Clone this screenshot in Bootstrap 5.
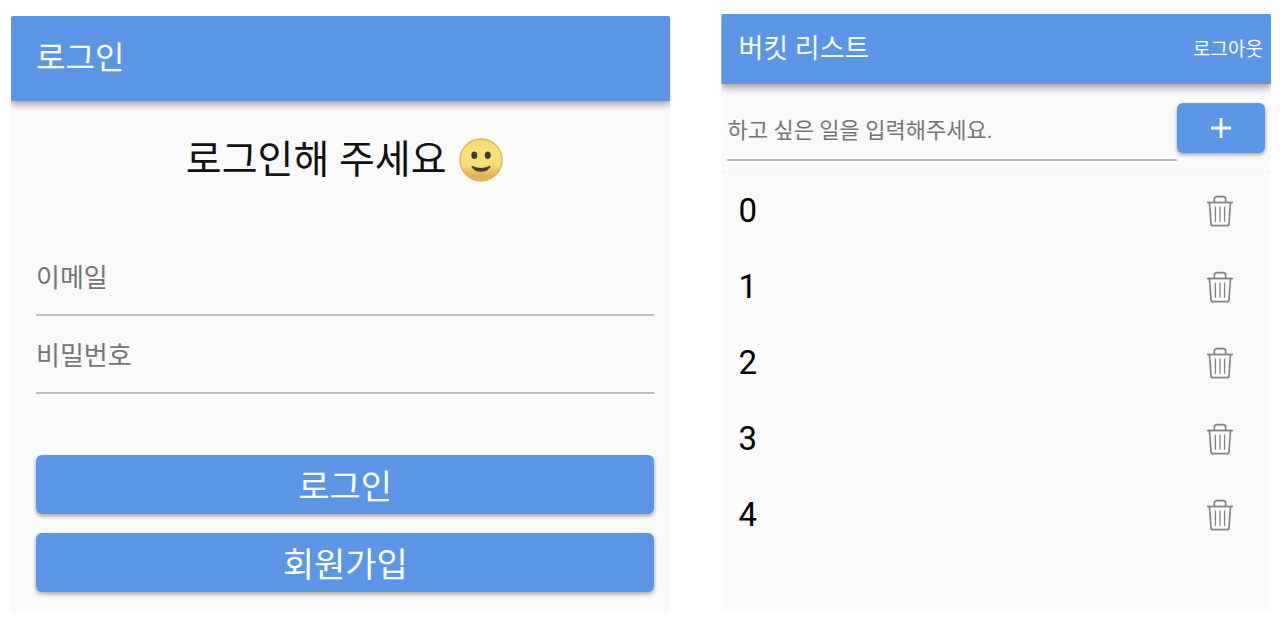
<!DOCTYPE html>
<html lang="ko">
<head>
<meta charset="utf-8">
<meta name="viewport" content="width=device-width, initial-scale=1">
<title>버킷 리스트</title>
<link href="https://cdn.jsdelivr.net/npm/bootstrap@5.3.0/dist/css/bootstrap.min.css" rel="stylesheet">
<style>
:root { --brand: #5b96e6; --surface: #fafafa; --hint: #757575; --line: #bdbdbd; }
body { font-family: Roboto, "Noto Sans CJK KR", sans-serif; background: #fff; color: #111; }
.screens { display: grid; grid-template-columns: 1fr; gap: 24px; padding: 14px 9px 9px 11px; }
@media (min-width: 992px) { .screens { grid-template-columns: 6fr 5fr; column-gap: 51px; } }
.screen { background: var(--surface); border-radius: 2px 2px 0 0; }
.screen-login { margin-top: 2px; }
.app-bar { background: var(--brand); color: #fff; border-radius: 2px 2px 0 0; box-shadow: 0 3px 8px rgba(0,0,0,.42); clip-path: inset(0 0 -20px 0); }
.app-bar h1 { font-weight: 400; line-height: 1; }
.bar-login { height: 85px; padding: 0 25px 2px; }
.bar-login h1 { font-size: 32px; }
.bar-list { height: 70px; padding: 0 8px 0 17px; }
.bar-list h1 { font-size: 27px; }
.bar-link { color: #fff; font-size: 19px; line-height: 1; }
.login-body { padding: 31px 16px 21px 25px; }
.greeting { font-size: 39px; font-weight: 400; line-height: 56px; margin-bottom: 50px; gap: 12px; }
.line-input { border: 0; border-bottom: 2px solid var(--line); border-radius: 0; background: transparent; padding: 4px 0 0; line-height: 2; box-shadow: none; }
.line-input:focus { background: transparent; border-color: var(--brand); box-shadow: none; }
.line-input::placeholder { color: var(--hint); line-height: 2; }
.login-body .line-input { height: 78px; font-size: 26px; }
.btn-brand { --bs-btn-color: #fff; --bs-btn-bg: var(--brand); --bs-btn-hover-color: #fff; --bs-btn-hover-bg: #4a87da; --bs-btn-active-color: #fff; --bs-btn-active-bg: #3f7bcd; border: 0; border-radius: 6px; box-shadow: 0 2px 4px rgba(0,0,0,.35); padding: 0; }
.login-actions { gap: 19px; margin-top: 61px; }
.login-actions .btn { height: 59px; font-size: 34px; line-height: 1; padding-top: 4px; }
.add-row { padding: 19px 6px 10px; border-bottom: 1px solid #f3f3f3; }
.add-row .line-input { height: 58px; font-size: 22px; padding: 0 0 2px; }
.add-row .btn { width: 88px; height: 50px; }
.bucket { --bs-list-group-bg: transparent; padding-top: 1px; }
.bucket .list-group-item { height: 76px; padding: 0 33px 0 17px; border: 0; font-size: 33px; color: #000; }
</style>
</head>
<body>
<main class="screens">
  <section class="screen screen-login d-flex flex-column">
    <header class="app-bar bar-login d-flex align-items-center">
      <h1 class="m-0">로그인</h1>
    </header>
    <form class="login-body">
      <h2 class="greeting d-flex justify-content-center align-items-center">로그인해 주세요
        <svg width="46" height="46" viewBox="0 0 46 46" role="img" aria-label="미소">
          <defs><linearGradient id="face" x1="0" y1="0" x2="0" y2="1"><stop offset="0" stop-color="#f2d96f"/><stop offset=".3" stop-color="#f5e47c"/><stop offset=".62" stop-color="#f4df75"/><stop offset=".88" stop-color="#e2ad5c"/><stop offset="1" stop-color="#e8b95c"/></linearGradient></defs>
          <circle cx="22" cy="23" r="21" fill="url(#face)" stroke="#e6b25b" stroke-width="1.4"/>
          <ellipse cx="15.3" cy="18.3" rx="3" ry="3.8" fill="#3f3d35"/>
          <ellipse cx="28.7" cy="18.3" rx="3" ry="3.8" fill="#3f3d35"/>
          <path d="M13.3 29Q22 32.8 30.7 29Q32 28.8 31.2 30.6Q28.2 34.8 22 34.8T12.8 30.6Q12 28.8 13.3 29Z" fill="#3f3d35"/>
        </svg>
      </h2>
      <input class="form-control line-input" id="email" type="email" placeholder="이메일" aria-label="이메일">
      <input class="form-control line-input" id="password" type="password" placeholder="비밀번호" aria-label="비밀번호">
      <div class="login-actions d-grid">
        <button class="btn btn-brand" type="button">로그인</button>
        <button class="btn btn-brand" type="button">회원가입</button>
      </div>
    </form>
  </section>

  <section class="screen">
    <header class="app-bar bar-list d-flex align-items-center justify-content-between">
      <h1 class="m-0">버킷 리스트</h1>
      <a class="bar-link text-decoration-none" href="#">로그아웃</a>
    </header>
    <form class="add-row d-flex align-items-start">
      <input class="form-control line-input flex-fill" id="job" type="text" placeholder="하고 싶은 일을 입력해주세요." aria-label="하고 싶은 일">
      <button class="btn btn-brand flex-shrink-0 d-flex align-items-center justify-content-center" type="button" aria-label="추가">
        <svg width="20" height="20" viewBox="0 0 20 20" fill="none" stroke="#fff" stroke-width="2.8"><path d="M10 0V20M0 10H20"/></svg>
      </button>
    </form>
    <svg class="d-none"><symbol id="trash" viewBox="0 0 36 36"><g fill="none" stroke="#858585"><path stroke-width="1.8" d="M5 9.5H31"/><path stroke-width="1.7" d="M12.3 9.5V6.2Q12.3 3.7 14.8 3.7H21.2Q23.7 3.7 23.7 6.2V9.5M7.5 9.8L9 30.8Q9.2 32.7 11.1 32.7H24.9Q26.8 32.7 27 30.8L28.5 9.8"/><path stroke-width="1.3" d="M13.4 13.5V28.7M18 13.5V28.7M22.6 13.5V28.7"/></g></symbol></svg>
    <ul class="bucket list-group list-group-flush">
      <li class="list-group-item d-flex align-items-center justify-content-between">0<button class="btn p-0 border-0 d-flex" type="button" aria-label="0 삭제"><svg width="36" height="36"><use href="#trash"/></svg></button></li>
      <li class="list-group-item d-flex align-items-center justify-content-between">1<button class="btn p-0 border-0 d-flex" type="button" aria-label="1 삭제"><svg width="36" height="36"><use href="#trash"/></svg></button></li>
      <li class="list-group-item d-flex align-items-center justify-content-between">2<button class="btn p-0 border-0 d-flex" type="button" aria-label="2 삭제"><svg width="36" height="36"><use href="#trash"/></svg></button></li>
      <li class="list-group-item d-flex align-items-center justify-content-between">3<button class="btn p-0 border-0 d-flex" type="button" aria-label="3 삭제"><svg width="36" height="36"><use href="#trash"/></svg></button></li>
      <li class="list-group-item d-flex align-items-center justify-content-between">4<button class="btn p-0 border-0 d-flex" type="button" aria-label="4 삭제"><svg width="36" height="36"><use href="#trash"/></svg></button></li>
    </ul>
  </section>
</main>
<script src="https://cdn.jsdelivr.net/npm/bootstrap@5.3.0/dist/js/bootstrap.bundle.min.js"></script>
</body>
</html>
